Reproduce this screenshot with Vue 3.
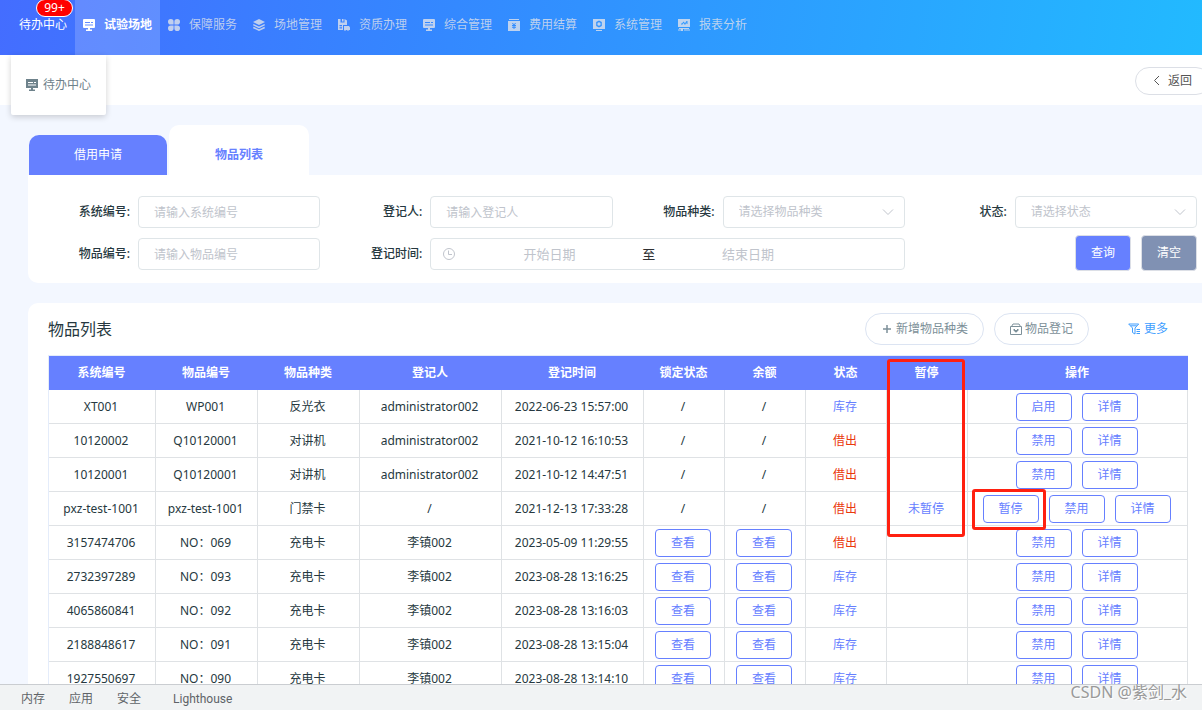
<script setup>
import { ref } from 'vue'

const navItems = [
  { label: '试验场地', icon: 'screen', active: true },
  { label: '保障服务', icon: 'clover' },
  { label: '场地管理', icon: 'layers' },
  { label: '资质办理', icon: 'save' },
  { label: '综合管理', icon: 'screen' },
  { label: '费用结算', icon: 'money' },
  { label: '系统管理', icon: 'gear' },
  { label: '报表分析', icon: 'chart' },
]

const columns = [
  { label: '系统编号', width: 107 },
  { label: '物品编号', width: 102 },
  { label: '物品种类', width: 102 },
  { label: '登记人', width: 142 },
  { label: '登记时间', width: 142 },
  { label: '锁定状态', width: 81 },
  { label: '余额', width: 81 },
  { label: '状态', width: 81 },
  { label: '暂停', width: 81, marked: true },
  { label: '操作', width: 220 },
]
const totalWidth = columns.reduce((sum, c) => sum + c.width, 0)

const row = (sys, item, kind, user, time, view, lent, paused, actions) =>
  ({ sys, item, kind, user, time, view, lent, paused, actions })

const rows = [
  row('XT001', 'WP001', '反光衣', 'administrator002', '2022-06-23 15:57:00', false, false, '', ['启用', '详情']),
  row('10120002', 'Q10120001', '对讲机', 'administrator002', '2021-10-12 16:10:53', false, true, '', ['禁用', '详情']),
  row('10120001', 'Q10120001', '对讲机', 'administrator002', '2021-10-12 14:47:51', false, true, '', ['禁用', '详情']),
  row('pxz-test-1001', 'pxz-test-1001', '门禁卡', '/', '2021-12-13 17:33:28', false, true, '未暂停', ['暂停', '禁用', '详情']),
  row('3157474706', 'NO：069', '充电卡', '李镇002', '2023-05-09 11:29:55', true, true, '', ['禁用', '详情']),
  row('2732397289', 'NO：093', '充电卡', '李镇002', '2023-08-28 13:16:25', true, false, '', ['禁用', '详情']),
  row('4065860841', 'NO：092', '充电卡', '李镇002', '2023-08-28 13:16:03', true, false, '', ['禁用', '详情']),
  row('2188848617', 'NO：091', '充电卡', '李镇002', '2023-08-28 13:15:04', true, false, '', ['禁用', '详情']),
  row('1927550697', 'NO：090', '充电卡', '李镇002', '2023-08-28 13:14:10', true, false, '', ['禁用', '详情']),
]

const sysNo = ref('')
const itemNo = ref('')
const person = ref('')
const kind = ref('')
const status = ref('')
const start = ref('')
const end = ref('')
</script>

<template>
  <div class="page">
    <header class="topbar">
      <a class="nav-home" href="#">待办中心<span class="badge">99+</span></a>
      <nav class="nav">
        <a v-for="n in navItems" :key="n.label" href="#" class="nav-item" :class="{ active: n.active }">
          <svg class="icon" viewBox="0 0 12 12" aria-hidden="true">
            <path v-if="n.icon === 'screen'" fill="currentColor" fill-rule="evenodd" d="M1 0h10a1 1 0 0 1 1 1v7a1 1 0 0 1-1 1H7v1.500h2V12H3v-1.500h2V9H1a1 1 0 0 1-1-1V1a1 1 0 0 1 1-1zM2 3v1h5V3zM8 3v1h2V3zM2 5.500v1h8v-1z" />
            <path v-else-if="n.icon === 'clover'" fill="currentColor" d="M2.800 0A2.800 2.800 0 0 1 5.600 2.800V5.600H2.800A2.800 2.800 0 0 1 2.800 0zM9.200 0a2.800 2.800 0 0 1 0 5.600H6.400V2.800A2.800 2.800 0 0 1 9.200 0zM2.800 6.400h2.800v2.800A2.800 2.800 0 1 1 2.800 6.400zM6.400 6.400h2.800A2.800 2.800 0 1 1 6.400 9.200z" />
            <g v-else-if="n.icon === 'layers'">
              <path fill="currentColor" d="M6 0l6 3-6 3-6-3z" />
              <path fill="none" stroke="currentColor" stroke-width="1.400" d="M.3 5.700L6 8.400l5.700-2.700M.3 8.500L6 11.200l5.700-2.700" />
            </g>
            <g v-else-if="n.icon === 'save'">
              <path fill="currentColor" fill-rule="evenodd" d="M0 0h2.500v3.500h4V0L9 1.500V6H5v5H0zM1.500 6v1.200H4V6zM1.500 8.300v1.200H4V8.300zM4 0h1.500v2.500H4z" />
              <path fill="currentColor" d="M6 7h5l1 1.500V11h-1l-1 1-1-1H8l-1 1-1-1z" />
            </g>
            <g v-else-if="n.icon === 'money'">
              <path fill="currentColor" fill-rule="evenodd" d="M1 0h10v1H1zM0 2h12v10H0zM4 4l1.300 2H4v1h1.500v.7H4v1h1.500V10h1V8.700H8v-1H6.500V7H8V6H6.700L8 4H7L6 5.500 5 4z" />
            </g>
            <g v-else-if="n.icon === 'gear'">
              <path fill="currentColor" fill-rule="evenodd" d="M0 0h12v10H0zM6 1.400L3.200 3v4L6 8.600 8.800 7V3zM6 3.300a1.700 1.700 0 1 1 0 3.400 1.700 1.700 0 0 1 0-3.400zM3 11h6v1H3z" />
            </g>
            <g v-else>
              <path fill="currentColor" fill-rule="evenodd" d="M0 0h12v8H0zM3 4.500v1h1.500l1-1.500L7 6l1.500-2.500V5h1V2h-1L7 4.200 5.500 2.500 4 4.500zM1 9h10v1H1zM0 10.500h3V10h2v2H3v-.5H0zM6 10.500h6v1H6z" />
            </g>
          </svg>
          <span>{{ n.label }}</span>
        </a>
      </nav>
    </header>

    <div class="subbar">
      <a class="dropdown" href="#">
        <svg class="icon" viewBox="0 0 12 12" aria-hidden="true">
          <path fill="currentColor" fill-rule="evenodd" d="M0 0h12v9H7v1.500h2V12H3v-1.500h2V9H0zM2 3v1h5V3zM8 3v1h2V3zM2 5.500v1h8v-1z" />
        </svg>
        待办中心
      </a>
      <button type="button" class="back">
        <svg class="icon" viewBox="0 0 12 12" aria-hidden="true">
          <path fill="none" stroke="currentColor" d="M8 1L3.500 5.500 8 10" />
        </svg>
        返回
      </button>
    </div>

    <main class="content">
      <div class="tabs">
        <button type="button" class="tab">借用申请</button>
        <button type="button" class="tab current">物品列表</button>
      </div>

      <form class="filters" @submit.prevent>
        <div class="field">
          <label for="f-sys">系统编号:</label>
          <input id="f-sys" v-model="sysNo" class="box" type="text" placeholder="请输入系统编号" />
        </div>
        <div class="field">
          <label for="f-person">登记人:</label>
          <input id="f-person" v-model="person" class="box" type="text" placeholder="请输入登记人" />
        </div>
        <div class="field">
          <label for="f-kind">物品种类:</label>
          <div class="select">
            <select id="f-kind" v-model="kind" class="box">
              <option value="">请选择物品种类</option>
            </select>
            <svg class="icon arrow" viewBox="0 0 12 12" aria-hidden="true"><path fill="none" stroke="currentColor" d="M1 3.500l5 5 5-5" /></svg>
          </div>
        </div>
        <div class="field">
          <label for="f-status">状态:</label>
          <div class="select">
            <select id="f-status" v-model="status" class="box">
              <option value="">请选择状态</option>
            </select>
            <svg class="icon arrow" viewBox="0 0 12 12" aria-hidden="true"><path fill="none" stroke="currentColor" d="M1 3.500l5 5 5-5" /></svg>
          </div>
        </div>
        <div class="field">
          <label for="f-item">物品编号:</label>
          <input id="f-item" v-model="itemNo" class="box" type="text" placeholder="请输入物品编号" />
        </div>
        <div class="field wide">
          <label for="f-start">登记时间:</label>
          <div class="box range">
            <span class="clock">
              <svg class="icon" viewBox="0 0 12 12" aria-hidden="true">
                <circle cx="6" cy="6" r="5.500" fill="none" stroke="currentColor" />
                <path fill="none" stroke="currentColor" d="M5.500 2.500v4H9" />
              </svg>
            </span>
            <input id="f-start" v-model="start" type="text" placeholder="开始日期" />
            <span class="to">至</span>
            <input v-model="end" type="text" placeholder="结束日期" aria-label="结束日期" />
          </div>
        </div>
        <div class="buttons">
          <button type="submit" class="btn primary">查询</button>
          <button type="reset" class="btn muted">清空</button>
        </div>
      </form>

      <section class="list">
        <div class="list-head">
          <h2>物品列表</h2>
          <button type="button" class="pill">
            <svg class="icon" viewBox="0 0 12 12" aria-hidden="true"><path fill="none" stroke="currentColor" stroke-width="1.500" d="M6 2v8M2 6h8" /></svg>
            新增物品种类
          </button>
          <button type="button" class="pill">
            <svg class="icon" viewBox="0 0 12 12" aria-hidden="true">
              <path fill="none" stroke="currentColor" d="M.5 3.500h11v8H.5zM1.500 3.500L3 1h6l1.500 2.500" />
              <path fill="currentColor" d="M3.500 6h1.500v1h2V6h1.500v1.500L6 9.800 3.500 7.500z" />
            </svg>
            物品登记
          </button>
          <a class="more" href="#">
            <svg class="icon" viewBox="0 0 12 12" aria-hidden="true">
              <path fill="none" stroke="currentColor" d="M.7 1h10L7 5v6L4.500 9.500V5zM2.500 2.800h6.300M8.500 6.500H12M8.500 8.500H12M8.500 10.500H12" />
            </svg>
            更多
          </a>
        </div>

        <table class="grid">
          <colgroup>
            <col v-for="c in columns" :key="c.label" :style="{ width: (c.width / totalWidth) * 100 + '%' }" />
          </colgroup>
          <thead>
            <tr>
              <th v-for="c in columns" :key="c.label" scope="col">
                {{ c.label }}<span v-if="c.marked" class="mark mark-column"></span>
              </th>
            </tr>
          </thead>
          <tbody>
            <tr v-for="r in rows" :key="r.sys">
              <td>{{ r.sys }}</td>
              <td>{{ r.item }}</td>
              <td>{{ r.kind }}</td>
              <td>{{ r.user }}</td>
              <td>{{ r.time }}</td>
              <td v-for="k in 2" :key="k">
                <div v-if="r.view" class="actions"><button type="button" class="small">查看</button></div>
                <template v-else>/</template>
              </td>
              <td :class="r.lent ? 'lent' : 'stock'">{{ r.lent ? '借出' : '库存' }}</td>
              <td class="stock">{{ r.paused }}</td>
              <td>
                <div class="actions">
                  <span v-for="a in r.actions" :key="a" class="action">
                    <button type="button" class="small">{{ a }}</button>
                    <span v-if="a === '暂停'" class="mark mark-button"></span>
                  </span>
                </div>
              </td>
            </tr>
          </tbody>
        </table>
      </section>
    </main>

    <footer class="tools">
      <a href="#">内存</a>
      <a href="#">应用</a>
      <a href="#">安全</a>
      <a href="#" class="spaced">Lighthouse</a>
      <span class="watermark">CSDN @紫剑_水</span>
    </footer>
  </div>
</template>

<style>
body {
  margin: 0;
  overflow: hidden;
}
</style>

<style scoped>
* {
  box-sizing: border-box;
}
.page {
  display: flex;
  flex-direction: column;
  height: 100vh;
  overflow: hidden;
  background: #f3f7ff;
  color: #263840;
  font: 12px/16px "Noto Sans", "Noto Sans CJK SC", sans-serif;
}
a {
  color: inherit;
  text-decoration: none;
}
button,
input,
select {
  margin: 0;
  font: inherit;
  color: inherit;
}
button {
  cursor: pointer;
  padding: 0;
  border: 0;
  white-space: nowrap;
}
.icon {
  display: block;
  flex: none;
  width: 12px;
  height: 12px;
}
.topbar {
  display: flex;
  flex: none;
  height: 55px;
  background: linear-gradient(100deg, #446dff, #3586ff 34%, #22baff);
}
.nav-home {
  position: relative;
  width: 75px;
  padding: 17px 0 0 19px;
  color: #fff;
}
.badge {
  position: absolute;
  top: -1px;
  left: 36px;
  width: 37px;
  height: 18px;
  border: 1px solid #fff;
  border-radius: 9px;
  background: #f00;
  text-align: center;
}
.nav {
  display: flex;
}
.nav-item {
  display: flex;
  gap: 9px;
  padding: 17px 8px 0;
  color: rgba(215, 222, 236, 0.850);
}
.nav-item .icon {
  margin-top: 2px;
}
.nav-item.active {
  background: rgba(255, 255, 255, 0.180);
  color: #fff;
  font-weight: bold;
}
.subbar {
  display: flex;
  flex: none;
  align-items: center;
  justify-content: flex-end;
  position: relative;
  height: 50px;
  padding-top: 2px;
  background: #fff;
}
.dropdown {
  position: absolute;
  top: 0;
  left: 11px;
  display: flex;
  align-items: center;
  gap: 5px;
  height: 60px;
  padding: 0 15px;
  background: #fff;
  border-radius: 0 0 2px 2px;
  box-shadow: 0 2px 6px rgba(0, 0, 0, 0.180);
  color: #6e828b;
}
.back {
  display: flex;
  align-items: center;
  gap: 5px;
  height: 28px;
  margin-right: -8px;
  padding: 0 17px 0 15px;
  border: 1px solid #dcdfe6;
  border-radius: 14px;
  background: #fff;
  color: #555;
}
.content {
  flex: 1;
  min-height: 0;
  padding: 20px 0 0 28px;
  overflow: hidden;
}
.tabs {
  display: flex;
  align-items: flex-end;
  gap: 2px;
  padding-left: 1px;
}
.tab {
  width: 138px;
  height: 40px;
  border-radius: 10px 10px 0 0;
  background: #6680ff;
  color: #fff;
}
.tab.current {
  width: 140px;
  height: 50px;
  padding-top: 10px;
  background: #fff;
  color: #6680ff;
  font-weight: bold;
}
.filters {
  display: grid;
  grid-template-columns: repeat(4, 1fr);
  gap: 10px 0;
  padding: 21px 5px 13px 0;
  border-radius: 0 0 0 10px;
  background: #fff;
}
.field {
  display: flex;
  align-items: center;
}
.field.wide {
  grid-column: span 2;
}
.field label {
  flex: none;
  width: 110px;
  padding-right: 8px;
  text-align: right;
  font-weight: 500;
}
.box {
  flex: 1;
  width: 100%;
  min-width: 0;
  height: 32px;
  padding: 0 15px;
  border: 1px solid #dfe5e8;
  border-radius: 4px;
  background: #fff;
}
input::placeholder {
  color: #c0c4cc;
  opacity: 1;
}
.select {
  position: relative;
  display: flex;
  flex: 1;
}
select.box {
  appearance: none;
  color: #c0c4cc;
}
.arrow {
  position: absolute;
  top: 10px;
  right: 11px;
  color: #c0c4cc;
  pointer-events: none;
}
.range {
  display: flex;
  align-items: center;
  padding: 0 10px;
  font-size: 13px;
}
.range input {
  flex: none;
  width: 39%;
  border: 0;
  padding: 0;
  background: none;
  text-align: center;
}
.clock {
  width: 20px;
  padding-left: 2px;
  color: #c0c4cc;
}
.to {
  width: 22px;
  text-align: center;
  color: #303133;
}
.buttons {
  display: flex;
  justify-content: flex-end;
  align-items: center;
  gap: 10px;
  height: 30px;
}
.btn {
  width: 56px;
  height: 36px;
  border: 1px solid #dcdfe6;
  border-radius: 4px;
  color: #fff;
}
.primary {
  background: #6680ff;
}
.muted {
  background: #8091b3;
}
.list {
  margin-top: 20px;
  padding: 10px 14px 20px 20px;
  border-radius: 10px 0 0 0;
  background: #fff;
}
.list-head {
  display: flex;
  align-items: center;
  gap: 10px;
  height: 32px;
  margin-bottom: 10px;
}
h2 {
  flex: 1;
  margin: 0;
  font-size: 16px;
  line-height: 24px;
  font-weight: normal;
}
.pill {
  display: flex;
  align-items: center;
  gap: 3px;
  height: 32px;
  padding: 0 15px;
  border: 1px solid #dce4f2;
  border-radius: 16px;
  background: #fff;
  color: #7d9099;
}
.more {
  display: flex;
  align-items: center;
  gap: 4px;
  padding: 0 20px 0 29px;
  color: #409eff;
}
.grid {
  width: 100%;
  table-layout: fixed;
  border-collapse: separate;
  border-spacing: 0;
  border: 1px solid #e4ecfa;
  border-width: 1px 0 0 1px;
  text-align: center;
}
th {
  position: relative;
  height: 34px;
  padding: 0 2px 0 0;
  background: #6680ff;
  color: #fff;
  font-weight: bold;
}
td {
  height: 34px;
  padding: 0 2px 0 0;
  border: 1px solid #dfe2e5;
  border-width: 0 1px 1px 0;
  white-space: nowrap;
}
.stock {
  color: #6680ff;
}
.lent {
  color: #ea380c;
}
.actions {
  display: flex;
  justify-content: center;
  gap: 10px;
}
.action {
  position: relative;
}
.small {
  display: block;
  width: 56px;
  height: 28px;
  border: 1px solid #6680ff;
  border-radius: 4px;
  background: #fff;
  color: #6680ff;
}
.mark {
  position: absolute;
  z-index: 2;
  border: 3px solid #ff2010;
  border-radius: 3px;
  pointer-events: none;
}
.mark-column {
  top: 3px;
  left: 0;
  right: 3px;
  height: 178px;
}
.mark-button {
  inset: -6px -7px -7px -11px;
}
.tools {
  position: relative;
  z-index: 3;
  display: flex;
  flex: none;
  align-items: center;
  gap: 24px;
  height: 26px;
  padding: 2px 21px 0;
  border-top: 1px solid #cacdd1;
  background: #f1f3f4;
  color: #5f6368;
}
.spaced {
  margin-left: 8px;
  font-family: Roboto, sans-serif;
}
.watermark {
  position: absolute;
  right: 15px;
  top: -5px;
  font-size: 16px;
  line-height: 24px;
  color: #999;
  text-shadow: 1px 1px 0 #fff;
}
</style>
